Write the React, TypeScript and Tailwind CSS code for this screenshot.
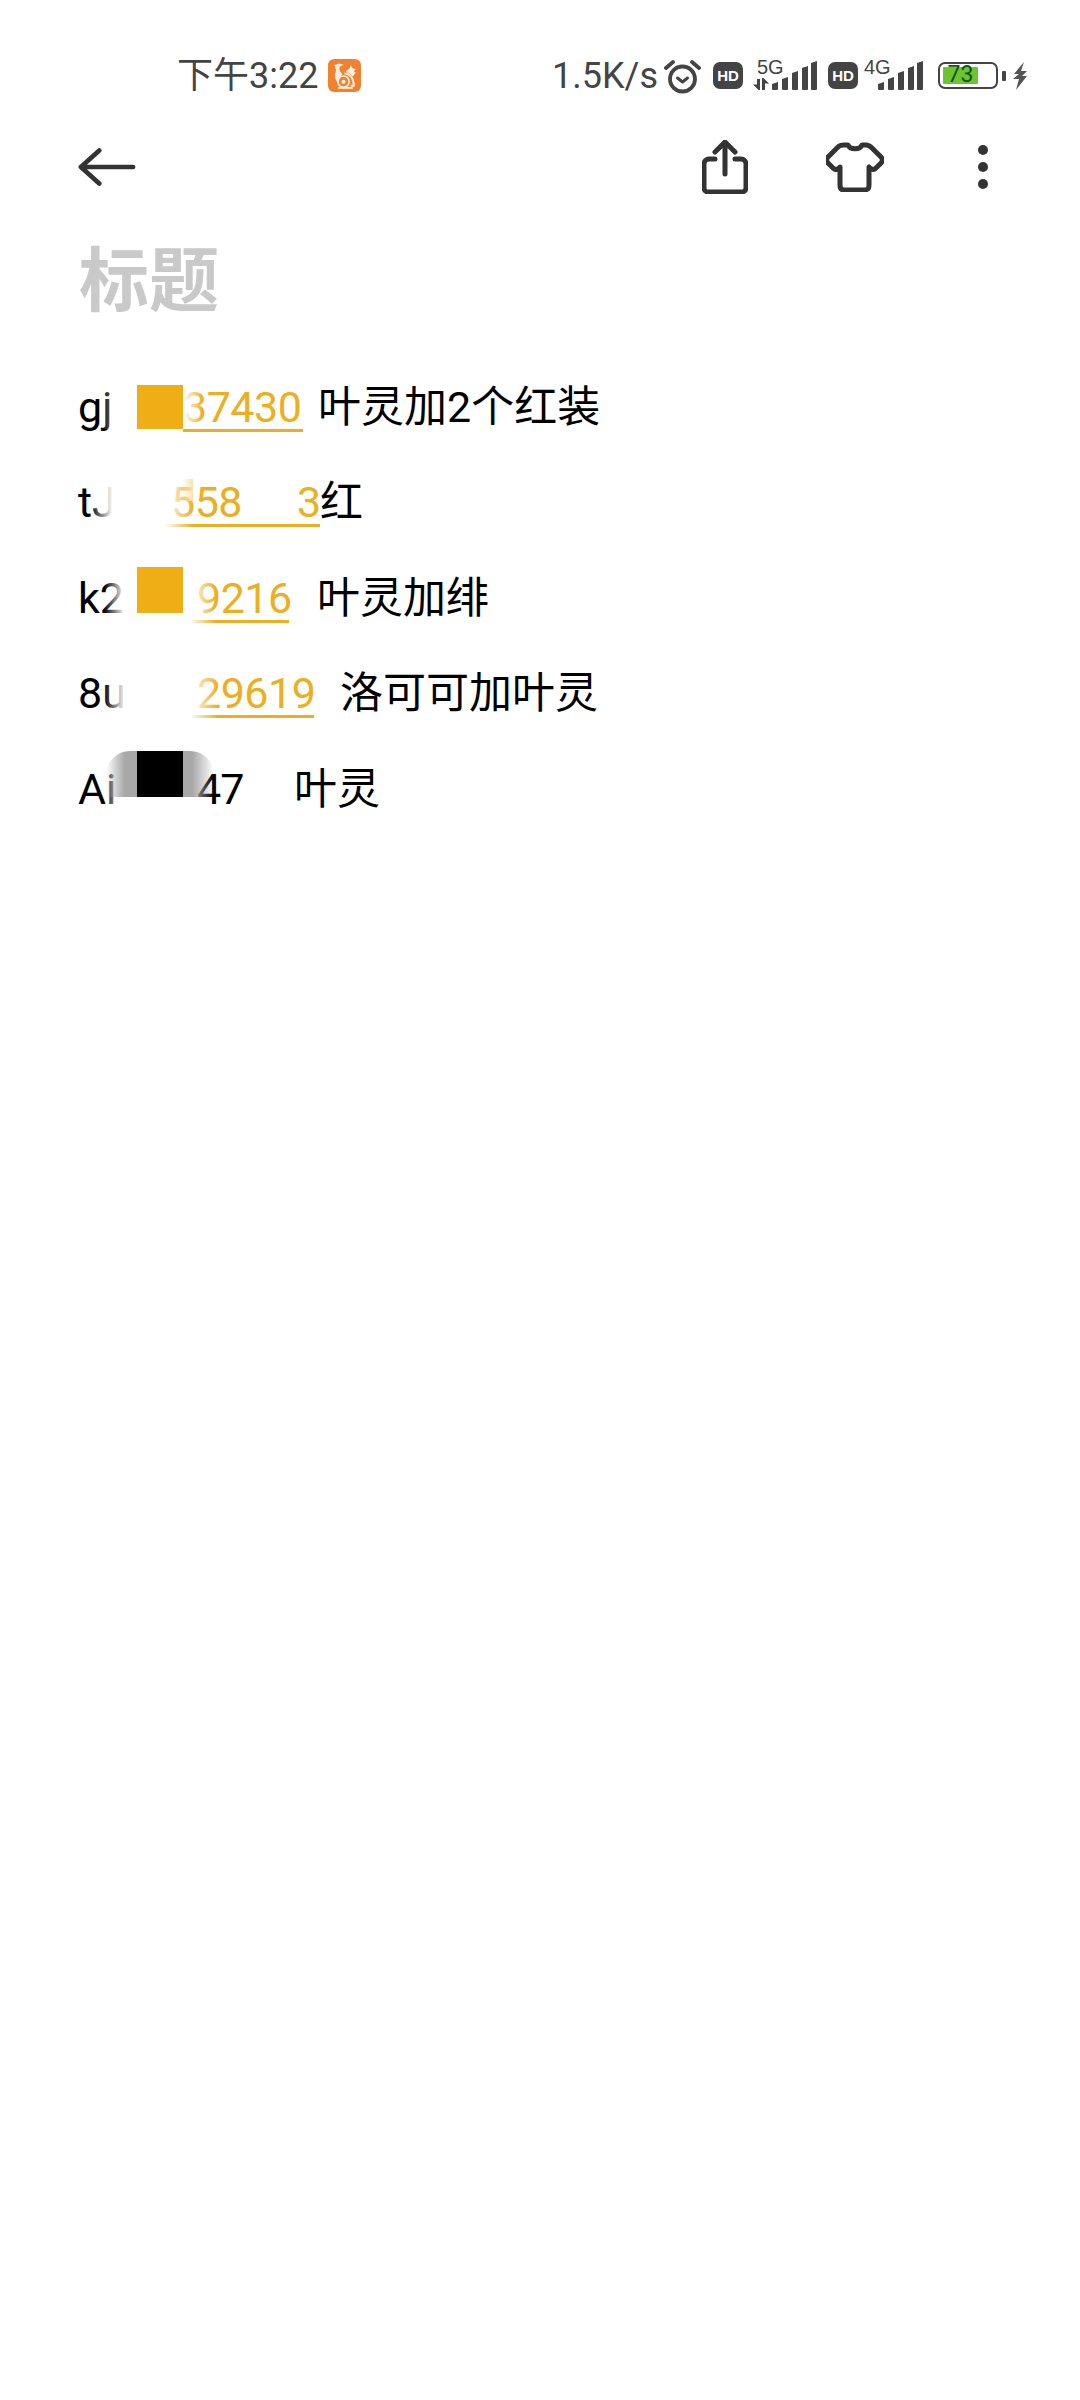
function SquirrelLogo() {
  return (
    <svg viewBox="0 0 32 32" className="w-[33px] h-[33px] ml-[8px] shrink-0">
      <rect width="32" height="32" rx="6" fill="#f0812f" />
      <path d="M6 6c3-2 8-2 9 0-2 0-4 1-4 3 0 3 2 4 3 6-3 2-4 5-3 9-3-2-5-6-4-10 1-2 1-5-1-8z" fill="#fdeede" />
      <path d="M17 12l4-3 1-3 2 3 3 1-2 2 2 1-3 4-3-3z" fill="#fdeede" />
      <circle cx="15" cy="22" r="5.500" fill="none" stroke="#fdeede" strokeWidth="1.600" />
      <circle cx="15" cy="22" r="2" fill="#fdeede" />
      <path d="M16 14c5 0 9 4 9 12h-3" fill="none" stroke="#fdeede" strokeWidth="2" />
      <path d="M10 28h14" stroke="#fdeede" strokeWidth="1.800" />
    </svg>
  );
}

function Alarm() {
  return (
    <svg viewBox="0 0 37 36" className="w-[37px] h-[36px] ml-[6px] shrink-0" fill="none" stroke="#444" strokeLinecap="round">
      <circle cx="18.500" cy="21" r="12.500" strokeWidth="3.800" />
      <path d="M13.500 20l5 4 5-4" strokeWidth="3" strokeLinejoin="round" />
      <path d="M2 10l7-6M35 10l-7-6" strokeWidth="3.800" />
    </svg>
  );
}

function HdBadge() {
  return (
    <div className="w-[30px] h-[27px] rounded-[7px] bg-[#444] flex items-center justify-center text-white text-[15px] font-bold leading-none shrink-0 font-['Liberation_Sans',sans-serif]">
      HD
    </div>
  );
}

function SlantBars({ bars }: { bars: number[][] }) {
  return (
    <>
      {bars.map(([x, top]) => (
        <path key={x} d={`M${x} ${top + 2}L${x + 6} ${top}V28a1 1 0 0 1-1 1H${x + 1}a1 1 0 0 1-1-1z`} />
      ))}
    </>
  );
}

function Signal5G() {
  return (
    <div className="relative w-[64px] h-[30px] ml-[10px] shrink-0">
      <svg viewBox="0 0 64 30" className="w-[64px] h-[30px]" fill="#444">
        <path d="M4 18h3v11H5.500L0 23.500h4zM9 17h1.500l5.500 5.500h-4V29H9z" />
        <SlantBars bars={[[19, 21], [29, 16], [39, 10], [49, 5], [58, 0]]} />
      </svg>
      <span className="absolute left-[4px] top-[-5px] text-[20px] leading-[22px] text-[#444] font-['Liberation_Sans',sans-serif]">5G</span>
    </div>
  );
}

function Signal4G() {
  return (
    <div className="relative w-[59px] h-[30px] ml-[6px] shrink-0">
      <svg viewBox="0 0 59 30" className="w-[59px] h-[30px]" fill="#444">
        <SlantBars bars={[[14, 21], [24, 16], [34, 10], [44, 5], [53, 0]]} />
      </svg>
      <span className="absolute left-[0px] top-[-5px] text-[20px] leading-[22px] text-[#444] font-['Liberation_Sans',sans-serif]">4G</span>
    </div>
  );
}

function Battery() {
  return (
    <div className="flex items-center ml-[15px] shrink-0">
      <div className="relative w-[60px] h-[27px] rounded-[7px] border-[2.500px] border-[#444] p-[3px]">
        <div className="w-[35px] h-full bg-[#6cc52e] rounded-[1px]" />
        <span className="absolute left-[3px] top-[0px] w-[35px] text-center text-[23px] leading-[22px] text-[#14500f] font-['Roboto',sans-serif]">73</span>
      </div>
      <div className="w-[4px] h-[10px] rounded-[1px] bg-[#444] ml-[4px]" />
      <svg viewBox="0 0 16 28" className="w-[18px] h-[28px] ml-[5px]" fill="#555">
        <path d="M12 0L2 12h5l-6 5h6L4 28l11-14h-5l5-5H9z" />
      </svg>
    </div>
  );
}

function StatusBar() {
  return (
    <div className="h-[91px] pt-[60px] pl-[177px] flex items-center text-[#444] font-['Roboto','Noto_Sans_CJK_SC',sans-serif]">
      <span className="text-[36px] leading-none w-[143px] whitespace-nowrap">下午3:22</span>
      <SquirrelLogo />
      <span className="text-[36px] leading-none ml-[191px] w-[110px] whitespace-nowrap">1.5K/s</span>
      <div className="-ml-[4px] flex items-center">
        <Alarm />
      </div>
      <div className="ml-[12px]"><HdBadge /></div>
      <Signal5G />
      <div className="ml-[11px]"><HdBadge /></div>
      <Signal4G />
      <Battery />
    </div>
  );
}

function Toolbar() {
  return (
    <div className="h-[84px] mt-[34px] pl-[78px] flex items-center">
      <svg viewBox="0 0 60 40" className="w-[58px] h-[40px]" fill="none" stroke="#333" strokeWidth="4.800" strokeLinecap="round" strokeLinejoin="round">
        <path d="M22 3L3 20l19 17M3 20h54" />
      </svg>
      <svg viewBox="0 0 46 54" className="w-[46px] h-[54px] ml-[566px]" fill="none" stroke="#333" strokeWidth="5" strokeLinecap="round" strokeLinejoin="round">
        <path d="M23 34V3M13 12l10-10 10 10" />
        <path d="M13 19H7a5 5 0 0 0-5 5v24a4 4 0 0 0 4 4h34a4 4 0 0 0 4-4V24a5 5 0 0 0-5-5h-6" />
      </svg>
      <svg viewBox="0 0 58 50" className="w-[58px] h-[50px] ml-[78px]" fill="none" stroke="#333" strokeWidth="5" strokeLinejoin="round">
        <path d="M18 3h4c2 5 12 5 14 0h4c3 0 4 1 6 3l9 9c2 2 2 4 0 6l-5 5c-2 2-4 2-6 0l-1-1v18c0 3-1 5-5 5H18c-3 0-4-2-4-5V25l-1 1c-2 2-4 2-6 0l-5-5c-2-2-2-4 0-6l10-10c2-2 3-2 6-2z" />
      </svg>
      <div className="ml-[94px] flex flex-col gap-[7px]">
        <div className="w-[10px] h-[10px] rounded-full bg-[#333]" />
        <div className="w-[10px] h-[10px] rounded-full bg-[#333]" />
        <div className="w-[10px] h-[10px] rounded-full bg-[#333]" />
      </div>
    </div>
  );
}

function Note({ children, className = "" }: { children: React.ReactNode; className?: string }) {
  return <span className={`leading-[50px] ${className}`}>{children}</span>;
}

function Link({ children, className = "" }: { children: React.ReactNode; className?: string }) {
  return (
    <span className={`text-[#ecae22] tracking-[-0.5px] border-b-[3px] border-[#ecae22] leading-[50px] h-[50px] block shrink-0 ${className}`}>
      {children}
    </span>
  );
}

export default function App() {
  return (
    <div className="w-[1080px] h-[2400px] bg-white overflow-hidden">
      <StatusBar />
      <Toolbar />
      <h1 className="pl-[79px] mt-[22px] text-[70px] leading-[90px] font-bold text-[#c9c9c9] font-['Noto_Sans_CJK_SC',sans-serif]">标题</h1>
      <div className="pl-[78px] mt-[38px] text-[43px] text-black font-['Roboto','Noto_Sans_CJK_SC',sans-serif] whitespace-nowrap">
        <div className="relative h-[95.500px] flex items-center">
          <Note className="w-[105px]">gj</Note>
          <Link className="w-[120px]">37430</Link>
          <Note className="ml-[15px]">叶灵加2个红装</Note>
          <div className="absolute left-[24px] top-[20px] w-[35px] h-[50px] bg-gradient-to-r from-white/0 to-white to-70%" />
          <div className="absolute left-[59px] top-[26px] w-[46px] h-[44px] bg-[#f0ae16]" />
          <div className="absolute left-[105px] top-[26px] w-[20px] h-[42px] bg-gradient-to-r from-white to-white/0" />
        </div>
        <div className="relative h-[95.500px] flex items-center">
          <Note className="w-[86px]">tJ</Note>
          <Link className="w-[156px] pl-[7px]">
            558<span className="ml-[55px]">3</span>
          </Link>
          <Note>红</Note>
          <div className="absolute left-[12px] top-[20px] w-[28px] h-[50px] bg-gradient-to-r from-white/0 to-white to-80%" />
          <div className="absolute left-[86px] top-[10px] w-[30px] h-[70px] bg-gradient-to-r from-white to-white/0" />
          <div className="absolute left-[105px] top-[24px] w-[10px] h-[22px] bg-gradient-to-r from-[#f8e2b4]/10 to-[#f8e2b4]" />
        </div>
        <div className="relative h-[95.500px] flex items-center">
          <Note className="w-[114px]">k2</Note>
          <Link className="w-[97px] pl-[5px]">9216</Link>
          <Note className="ml-[28px]">叶灵加绯</Note>
          <div className="absolute left-[26px] top-[20px] w-[26px] h-[50px] bg-gradient-to-r from-white/0 to-white to-80%" />
          <div className="absolute left-[59px] top-[17px] w-[46px] h-[46px] bg-[#f0ae16]" />
          <div className="absolute left-[114px] top-[20px] w-[24px] h-[56px] bg-gradient-to-r from-white/90 to-white/0" />
        </div>
        <div className="relative h-[95.500px] flex items-center">
          <Note className="w-[114px]">8u</Note>
          <Link className="w-[122px] pl-[5px]">29619</Link>
          <Note className="ml-[26px]">洛可可加叶灵</Note>
          <div className="absolute left-[26px] top-[20px] w-[26px] h-[50px] bg-gradient-to-r from-white/0 to-white to-80%" />
          <div className="absolute left-[114px] top-[20px] w-[26px] h-[56px] bg-gradient-to-r from-white/90 to-white/0" />
        </div>
        <div className="relative h-[95.500px] flex items-center">
          <Note className="w-[119px]">Ai</Note>
          <Note className="w-[40px] tracking-[-1px]">47</Note>
          <Note className="ml-[57px]">叶灵</Note>
          <div className="absolute left-[26px] top-[28px] w-[33px] h-[40px] bg-gradient-to-r from-white/0 to-white to-60%" />
          <div className="absolute left-[28px] top-[10px] w-[31px] h-[46px] rounded-tl-[24px] bg-gradient-to-r from-white/0 to-[#a8a8a8] to-60%" />
          <div className="absolute left-[59px] top-[10px] w-[46px] h-[46px] bg-black" />
          <div className="absolute left-[105px] top-[10px] w-[31px] h-[46px] rounded-tr-[24px] bg-gradient-to-r from-[#a8a8a8] from-30% to-white/0" />
        </div>
      </div>
    </div>
  );
}
